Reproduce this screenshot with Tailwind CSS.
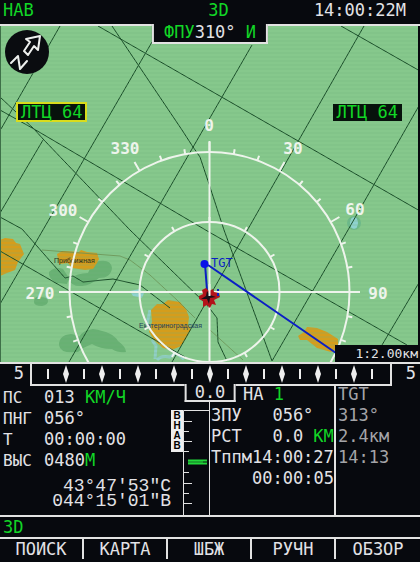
<!DOCTYPE html>
<html lang="ru">
<head>
<meta charset="utf-8">
<meta name="viewport" content="width=device-width, initial-scale=1">
<title>НАВ</title>
<script src="https://cdn.jsdelivr.net/npm/@tailwindcss/browser@4"></script>
</head>
<body class="min-h-screen bg-[#07090e] font-['DejaVu_Sans_Mono',monospace] text-[17px] leading-[21px] text-[#e2e2e6]">
<main class="flex min-h-screen flex-col">
  <header class="grid h-[26px] grid-cols-[1fr_auto_1fr] items-start border-b-2 border-[#e2e2e2] pr-3.5 pl-[3px]">
    <span class="text-[#12d626]">НАВ</span>
    <span class="pl-7 text-[#12d626]">3D</span>
    <time class="text-right">14:00:22М</time>
  </header>

  <section class="relative bg-[#86c68c]" aria-label="Карта">
    <svg class="block w-full" viewBox="0 26 420 336" fill="none">
      <defs>
        <pattern id="scan" width="4" height="4" patternUnits="userSpaceOnUse"><path d="M0 1h4" stroke="#6fb07c" stroke-opacity=".35"/></pattern>
      </defs>
      <rect y="26" width="420" height="336" fill="#86c88c"/>
      <g fill="#68b173">
        <path d="M49 272q6-6 14-3l6 9-2 6-10-1q-9-4-8-11zM68 279q10-6 20-6 4-10 11-12 12-2 13 7-1 10-13 10-8 7-17 8-10 1-14-7z"/>
        <path d="M34 302q0-6 6-5 8 0 8 4 0 4-6 5-8 0-8-4zM59 345q0-10 12-11 6 1 8 3 4-7 14-8 20 3 25 12 8 6 8 11-8 1-14-3-12 0-20-5-10 4-14 8-18 2-19-7z"/>
      </g>
      <g fill="#8fd2cf">
        <ellipse cx="354" cy="223" rx="7" ry="7" fill="#6cb98a"/><ellipse cx="354" cy="223" rx="4" ry="6"/>
        <path d="M130 291l9-2 5 4-2 5-9-2z"/>
      </g>
      <path d="M152 340l4 6-1 13M157 360q4-5 13-3l6-4 8 6M150 310l-3 14 5 6" stroke="#90cfc6" stroke-width="3"/>
      <g fill="#d59d1c">
        <path d="M0 240l5-2 8 1 3 4 4 1 4 10-6 8-3 8-8 3-7 3z"/>
        <path d="M57 254l5-3 17 1 2-2 6 2 10 1 2 6-2 4-4 6-8 1-13-2-4-5-9 1z"/>
        <path d="M151 310l6-6 6 0 5-4 12 2 6 7 3 8-1 8 3 4-4 8-6 9-9 4-9-2-9-8-5-8 3-10z"/>
        <path d="M298 336l6-4 3-5 10 1 10 4 11 7 0 10-7 3-14-4-10-8-7 0z"/>
      </g>
      <path d="M42 250l78 6 10 4 20 15 27 25 18 18M210 330l33 30" stroke="#67894a" stroke-opacity=".7"/>
      <g stroke="#174a26" stroke-width="1">
        <path d="M60 26L1 129M98 26L420 211M112 26L182 130L193 147L200 157L209 184L224 230L272 361M152 42L0 304M252 45L69 362M364 26L172 362M420 104L348 230L272 361M420 281L382 345M341 26L420 71"/>
        <path d="M0 97L34 129L44 140L130 230L207 305L217 318L218 342L227 361M0 110L34 129L209 232L407 345M43 140L0 213M0 217L22 229L65 278L73 276L83 282L113 279L140 285L170 308M0 251L155 340L185 357"/>
      </g>
      <rect y="26" width="420" height="336" fill="url(#scan)"/>
      <g font-family="Liberation Sans, sans-serif" font-size="7" fill="#2e2e1c">
        <text x="54" y="263">Приближная</text>
        <text x="139" y="328" fill="#23405a">Екатериноградская</text>
      </g>
      <g stroke="#eef4ec" stroke-width="2">
        <circle cx="209.5" cy="292" r="140"/>
        <circle cx="209.5" cy="292" r="70"/>
        <path d="M209.5 141V362M59 292H360"/>
        <g id="ticks"></g>
      </g>
      <path d="M205 264L207 290M208 265L336 353" stroke="#0b1fc4" stroke-width="2"/>
      <circle cx="204.5" cy="264" r="4" fill="#0a12e8"/>
      <path d="M202 290l4-2 3 3 4-2 1 3 5 1 1 4-6 3 2 5-4-1-2 4-3-3-4 2 0-6-4-2 0-3 4-2z" fill="#b3131a"/>
      <path d="M207 291l3 4 6 2-6 1-1 6-2-5-6 0 5-3z" fill="#1b0f18"/>
      <path d="M218 289v2M218 293v3" stroke="#0b1fc4" stroke-width="2"/>
      <path d="M209.5 284V296" stroke="#eef4ec" stroke-width="2"/>
      <text x="211" y="267" font-family="DejaVu Sans Mono, monospace" font-size="12" fill="#0b1fc4">TGT</text>
      <g font-family="DejaVu Sans Mono, monospace" font-weight="bold" font-size="16" fill="#eef4ec" text-anchor="middle">
        <text x="209" y="131">0</text><text x="125" y="154">330</text><text x="63" y="216">300</text><text x="40" y="299">270</text>
        <text x="293" y="154">30</text><text x="355" y="215">60</text><text x="378" y="299">90</text>
      </g>
      <circle cx="27" cy="52" r="22" fill="#0a0c10"/>
      <g stroke="#eef0ee" stroke-width="2" stroke-linejoin="round" stroke-linecap="round">
        <path d="M40 36L26 39L30 42L24 51L28 55L34 46L38 50Z"/>
        <path d="M11 63L18 56L20 69L27 61"/>
      </g>
      <path d="M.5 26V362" stroke="#3e7048"/><path d="M419 26V362" stroke="#07090e" stroke-width="2"/>
    </svg>
    <div class="absolute -top-0.5 left-1/2 -translate-x-1/2 border-2 border-t-0 border-[#e2e2e2] bg-[#07090e] px-2.5 pb-px leading-[17px] whitespace-pre"><span class="text-[#12d626]">ФПУ</span>310° <span class="text-[#12d626]">И</span></div>
    <span class="absolute top-[76px] left-4 border-2 border-[#d9dc1c] bg-[#07120c] px-[3px] leading-4 text-[#12d626]">ЛТЦ 64</span>
    <span class="absolute top-[78px] right-[18px] bg-[#07120c] px-1 leading-[17px] text-[#12d626]">ЛТЦ 64</span>
    <div class="absolute right-0 bottom-0 bg-[#07090e] pr-0.5 pl-5 text-[13px] leading-[17px]">1:2.00км</div>
  </section>

  <section class="relative flex border-t-2 border-[#e2e2e2]" aria-label="Крен">
    <span class="w-[30px] pr-1.5 text-right leading-[19px]">5</span>
    <svg class="block h-[22px] min-w-0 flex-1 border-x-2 border-b-2 border-[#e2e2e2]" viewBox="32 0 358 20" preserveAspectRatio="none" fill="#eeeeee" id="slip"></svg>
    <span class="w-[28px] pr-1 text-right leading-[19px]">5</span>
    <div class="absolute top-5 left-1/2 z-10 -translate-x-1/2 border-2 border-t-0 border-[#e2e2e2] bg-[#07090e] px-2 leading-4">0.0</div>
  </section>

  <section class="grid flex-1 grid-cols-[1fr_126px_84px] border-b-2 border-[#e2e2e2]">
    <div class="flex border-r border-[#e2e2e2]">
      <div class="flex flex-1 flex-col pt-px pl-[3px] whitespace-pre">
        <dl class="grid grid-cols-[41px_1fr]">
          <dt class="text-[16px]">ПС</dt><dd>013 <span class="text-[#12d626]">КМ/Ч</span></dd>
          <dt class="text-[16px]">ПНГ</dt><dd>056°</dd>
          <dt class="text-[16px]">Т</dt><dd>00:00:00</dd>
          <dt class="text-[16px]">ВЫС</dt><dd>0480<span class="text-[#12d626]">М</span></dd>
        </dl>
        <div class="pt-2 text-right font-['Liberation_Mono',monospace] text-[18px] leading-[15px]">43°47'53"С
044°15'01"В</div>
      </div>
      <div class="mt-6 h-[42px] w-3 bg-[#eeeeee] pt-px text-center font-['Liberation_Sans',sans-serif] text-[10px] leading-[10px] font-bold text-black">В<br>Н<br>А<br>В</div>
      <svg class="mt-6 w-[26px]" viewBox="0 0 26 105" preserveAspectRatio="xMinYMin meet" fill="none" stroke="#e2e2e2" stroke-width="1">
        <path d="M26 .5H.5V105M0 11.5H9M0 21.5H6M0 31.5H9M0 41.5H6M0 62.5H6M0 73.5H9M0 83.5H6M0 93.5H9"/>
        <path d="M5 50.5H24M5 53.5H24" stroke="#22d83a" stroke-width="2"/><path d="M5 52H20" stroke="#22d83a"/>
      </svg>
    </div>
    <div class="-mt-0.5 border-r-2 border-[#e2e2e2] pl-px whitespace-pre"><div class="pl-8">НА <span class="text-[#12d626]">1</span></div><div>ЗПУ   056°</div><div>РСТ   0.0 <span class="text-[#12d626]">КМ</span></div><div>Тппм14:00:27</div><div class="pl-[41px]">00:00:05</div></div>
    <div class="-mt-0.5 pl-0.5 text-[#a4a4a8]"><div>TGT</div><div>313°</div><div>2.4км</div><div>14:13</div></div>
  </section>

  <div class="h-[20px] pl-[3px] leading-[20px] text-[#12d626]">3D</div>
  <nav class="grid h-[26px] grid-cols-5 border-t-2 border-[#e2e2e2] pb-1" aria-label="Режимы">
    <button class="border-r-2 border-[#e2e2e2] leading-4">ПОИСК</button>
    <button class="border-r-2 border-[#e2e2e2] leading-4">КАРТА</button>
    <button class="border-r-2 border-[#e2e2e2] leading-4">ШБЖ</button>
    <button class="border-r-2 border-[#e2e2e2] leading-4">РУЧН</button>
    <button class="leading-4">ОБЗОР</button>
  </nav>
</main>
<script>
// Compass graduations: every 10° on the outer ring, every 30° on the inner ring
const tick = (r, len, deg) => {
  const a = deg * Math.PI / 180, s = Math.sin(a), c = Math.cos(a);
  return `M${209.5 + r * s} ${292 - r * c}L${209.5 + (r + len) * s} ${292 - (r + len) * c}`;
};
let d = '';
for (let k = 0; k < 360; k += 10) {
  d += tick(140, k % 30 ? 5 : 10, k);
  if (k % 30 === 0) d += tick(70, 5, k);
}
document.getElementById('ticks').innerHTML = `<path d="${d}"/>`;

// Slip scale: bars and diamonds alternate
let m = '';
for (let i = 0; i < 19; i++) {
  const x = 48 + i * 18;
  m += i % 2 ? `<path d="M${x} 1l3 9-3 9-3-9z"/>` : `<path d="M${x - 1} 5h2v10h-2z"/>`;
}
document.getElementById('slip').innerHTML = m;
</script>
</body>
</html>
